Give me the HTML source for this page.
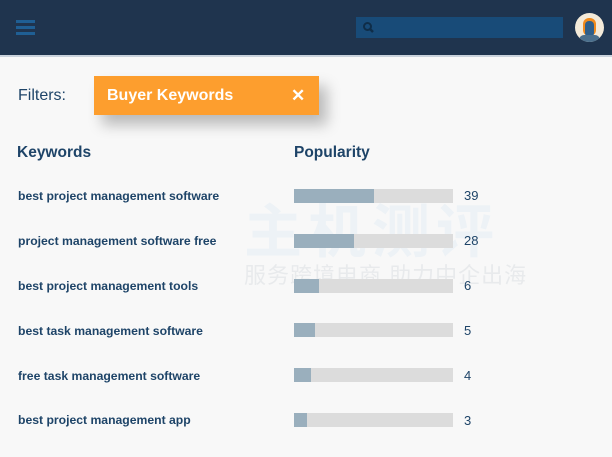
<!DOCTYPE html>
<html><head><meta charset="utf-8"><style>
body{margin:0;width:612px;height:457px;overflow:hidden;background:#f8f8f8;font-family:"Liberation Sans","Noto Sans CJK SC",sans-serif;position:relative}
.hdr{position:absolute;left:0;top:0;width:612px;height:55px;background:#1f344e;border-bottom:2px solid #c9d2dc}
.ham{position:absolute;left:16px;width:19px;height:3px;background:#1f5f94}
.search{position:absolute;left:356px;top:17px;width:207px;height:21px;background:#184b78}
.av{position:absolute;left:575px;top:13px;width:29px;height:29px;border-radius:50%;background:#f3ead9;overflow:hidden}
.lbl{position:absolute;color:#1e4468}
.chip{position:absolute;left:94px;top:76px;width:225px;height:39px;background:#fd9e2e;box-shadow:8px 10px 14px rgba(0,0,0,.25);color:#fff;font-weight:bold;font-size:16px;line-height:39px}
.row{position:absolute;left:18px;font-size:12.2px;font-weight:bold;color:#1e4468}
.bar{position:absolute;left:294px;width:159px;height:14px;background:#dcdcdc}
.bar i{position:absolute;left:0;top:0;height:14px;background:#9aafbd}
.n{position:absolute;left:464px;font-size:13px;color:#1e4468}
.wm{position:absolute;left:244px;top:258px;font-size:22px;color:#e8eaec;letter-spacing:1px}
.wm2{position:absolute;left:244px;top:185px;font-size:58px;font-weight:bold;color:#edf2f6;letter-spacing:6px}
</style></head><body>
<div class="wm2">主机测评</div>
<div class="wm">服务跨境电商 助力中企出海</div>
<div class="hdr">
<div class="ham" style="top:20px"></div><div class="ham" style="top:26px"></div><div class="ham" style="top:32px"></div>
<div class="search"><svg width="14" height="14" style="position:absolute;left:6px;top:4px"><circle cx="5.5" cy="5.5" r="3.5" stroke="#0f2d48" stroke-width="2" fill="none"/><line x1="8" y1="8" x2="11" y2="11" stroke="#0f2d48" stroke-width="2.5"/></svg></div>
<div class="av"><div style="position:absolute;left:8px;top:5px;width:13px;height:18px;border-radius:6px;background:#f08a1c"></div><div style="position:absolute;left:10px;top:8px;width:9px;height:16px;border-radius:4px;background:#2f5f8a"></div><div style="position:absolute;left:4px;top:22px;width:21px;height:10px;border-radius:8px;background:#4a6f8d"></div></div>
</div>
<div class="lbl" style="left:18px;top:87px;font-size:16px">Filters:</div>
<div class="chip"><span style="position:absolute;left:13px">Buyer Keywords</span><span style="position:absolute;left:197px;font-size:17px">✕</span></div>
<div class="lbl" style="left:17px;top:144px;font-size:15.5px;font-weight:bold">Keywords</div>
<div class="lbl" style="left:294px;top:144px;font-size:15.5px;font-weight:bold">Popularity</div>

<div class="row" style="top:189px">best project management software</div>
<div class="bar" style="top:189px"><i style="width:80px"></i></div><div class="n" style="top:188px">39</div>
<div class="row" style="top:234px">project management software free</div>
<div class="bar" style="top:234px"><i style="width:60px"></i></div><div class="n" style="top:233px">28</div>
<div class="row" style="top:279px">best project management tools</div>
<div class="bar" style="top:279px"><i style="width:25px"></i></div><div class="n" style="top:278px">6</div>
<div class="row" style="top:324px">best task management software</div>
<div class="bar" style="top:323px"><i style="width:21px"></i></div><div class="n" style="top:323px">5</div>
<div class="row" style="top:369px">free task management software</div>
<div class="bar" style="top:368px"><i style="width:17px"></i></div><div class="n" style="top:368px">4</div>
<div class="row" style="top:413px">best project management app</div>
<div class="bar" style="top:413px"><i style="width:13px"></i></div><div class="n" style="top:413px">3</div>
</body></html>
